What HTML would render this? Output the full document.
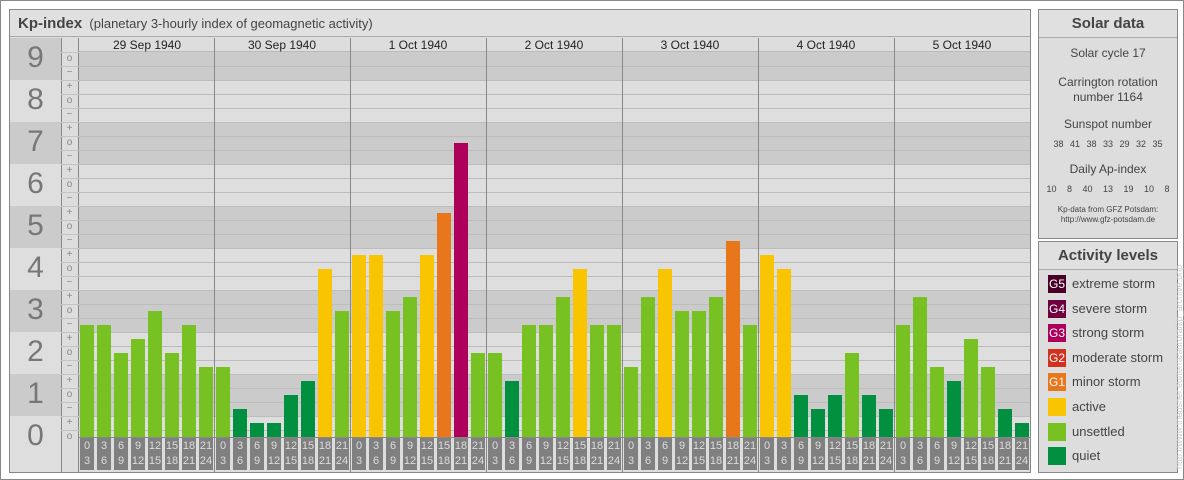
<!DOCTYPE html>
<html><head><meta charset="utf-8"><style>
*{margin:0;padding:0;box-sizing:border-box}
body{width:1184px;height:480px;background:#fff;font-family:"Liberation Sans",sans-serif;position:relative;overflow:hidden;border:1px solid #888}
.a{position:absolute}
#main{left:8px;top:8px;width:1022px;height:464px;background:#ddd;border:1px solid #888}
.hd{background:#e0e0e0;border-bottom:1px solid #aaa}
.num{color:#777;font-size:30px;text-align:center;width:51px;left:0}
.pm{color:#888;font-size:10px;width:17px;text-align:center;left:51px;line-height:14px}
.bar{width:14px}
.tl{width:14px;height:32px;background:#808080;color:#ddd;font-size:11px;text-align:center;line-height:15px;padding-top:1px}
.box{background:#ddd;border:1px solid #888;color:#444;text-align:center}
.lg{left:9px;width:18px;height:18px;color:#fff;font-size:12px;line-height:18px;text-align:center}
.lt{left:33px;font-size:13px;color:#444}
</style></head><body>
<div class="a" id="main">
 <div class="a hd" style="left:0;top:0;width:1020px;height:27px;font-size:13px;color:#444;line-height:27px;padding-left:8px"><b style="font-size:15px">Kp-index</b>&nbsp;&nbsp;(planetary 3-hourly index of geomagnetic activity)</div>
 <div id="g"></div>
</div>
<div class="a box" style="left:1037px;top:8px;width:140px;height:230px">
 <div class="hd" style="height:28px;line-height:28px;font-weight:bold;font-size:15px">Solar data</div>
 <div style="font-size:12px;margin-top:8px">Solar cycle 17</div>
 <div style="font-size:12px;margin-top:15px;line-height:15px">Carrington rotation<br>number 1164</div>
 <div style="font-size:12px;margin-top:12px">Sunspot number</div>
 <div style="font-size:9px;margin-top:8px;word-spacing:4px">38 41 38 33 29 32 35</div>
 <div style="font-size:12px;margin-top:13px">Daily Ap-index</div>
 <div style="font-size:9px;margin-top:8px;word-spacing:8px">10 8 40 13 19 10 8</div>
 <div style="font-size:8px;margin-top:11px;line-height:10px">Kp-data from GFZ Potsdam:<br>http://www.gfz-potsdam.de</div>
</div>
<div class="a box" style="left:1037px;top:240px;width:140px;height:232px">
 <div class="hd" style="height:28px;line-height:28px;font-weight:bold;font-size:15px">Activity levels</div>
 <div id="lgd"></div>
</div>
<div class="a" style="left:1173px;top:468px;transform:rotate(-90deg);transform-origin:0 0;font-size:9px;color:#ccc;white-space:nowrap">http://www.theusner.eu/terra/aurora/kp_archive.php</div>
<script>
(function(){
var g='',H=427;
for(var n=0;n<=9;n++){var tp=H-42*n-21,bt=H-42*n+21;if(n==9)tp=28;if(n==0)bt=462;
 var c=(n%2)?'#cbcbcb':'#dedede';
 g+='<div class="a" style="left:0;top:'+tp+'px;width:51px;height:'+(bt-tp)+'px;background:'+c+'"></div>';
 if(tp<42)tp=42;if(n==0)bt=H;
 g+='<div class="a" style="left:69px;top:'+tp+'px;width:951px;height:'+(bt-tp)+'px;background:'+c+'"></div>';
 g+='<div class="a num" style="top:'+(H-42*n-18)+'px">'+n+'</div>';}
g+='<div class="a" style="left:51px;top:28px;width:18px;height:434px;background:#ddd;border-left:1px solid #888;border-right:1px solid #888"></div>';
g+='<div class="a" style="left:69px;top:28px;width:951px;height:14px;background:#ddd;border-bottom:1px solid #bbb"></div>';
for(var k=0;k<=27;k++){var y=H-14*k;var s=['o','+','−'][k%3];
 if(k<27)g+='<div class="a" style="left:69px;top:'+(y-7)+'px;width:951px;height:1px;background:#bdbdbd"></div>';
 g+='<div class="a" style="left:51px;top:'+(y-7)+'px;width:18px;height:1px;background:#c4c4c4"></div>';
 g+='<div class="a pm" style="top:'+(y-7)+'px">'+s+'</div>';}
var dates=['29 Sep 1940','30 Sep 1940','1 Oct 1940','2 Oct 1940','3 Oct 1940','4 Oct 1940','5 Oct 1940'];
var dl=[69,204,340,476,612,748,884,1020];
for(var d=0;d<7;d++){g+='<div class="a" style="left:'+dl[d]+'px;top:28px;width:136px;text-align:center;font-size:12px;color:#222;line-height:14px">'+dates[d]+'</div>';
 if(d>0)g+='<div class="a" style="left:'+dl[d]+'px;top:28px;width:1px;height:434px;background:#888"></div>';}
var v=[8,8,6,7,9,6,8,5, 5,2,1,1,3,4,12,9, 13,13,9,10,13,16,21,6, 6,4,8,8,10,12,8,8, 5,10,12,9,9,10,14,8, 13,12,3,2,3,6,3,2, 8,10,5,4,7,5,2,1];
var T=['0<br>3','3<br>6','6<br>9','9<br>12','12<br>15','15<br>18','18<br>21','21<br>24'];
for(var i=0;i<56;i++){var x=70+17*i,t=v[i];
 var c=t<=4?'#00903f':t<=10?'#77c122':t<=13?'#f9c400':t<=16?'#e8761b':t<=19?'#d73027':'#ad005a';
 g+='<div class="a bar" style="left:'+x+'px;top:'+(H-14*t)+'px;height:'+(14*t)+'px;background:'+c+'"></div>';
 g+='<div class="a tl" style="left:'+x+'px;top:'+(H+1)+'px">'+T[i%8]+'</div>';}
g+='<div class="a" style="left:69px;top:'+H+'px;width:951px;height:1px;background:#888"></div>';
document.getElementById('g').innerHTML=g;
var L=[['G5','extreme storm','#4a0026'],['G4','severe storm','#6e0040'],['G3','strong storm','#ad005a'],['G2','moderate storm','#d4301e'],['G1','minor storm','#e8761b'],['','active','#f9c400'],['','unsettled','#77c122'],['','quiet','#00903f']];
var h='';for(var j=0;j<8;j++){var y=33+24.6*j;h+='<div class="a lg" style="top:'+y+'px;background:'+L[j][2]+'">'+L[j][0]+'</div><div class="a lt" style="top:'+(y+1)+'px">'+L[j][1]+'</div>';}
document.getElementById('lgd').innerHTML=h;
})();
</script>
</body></html>
